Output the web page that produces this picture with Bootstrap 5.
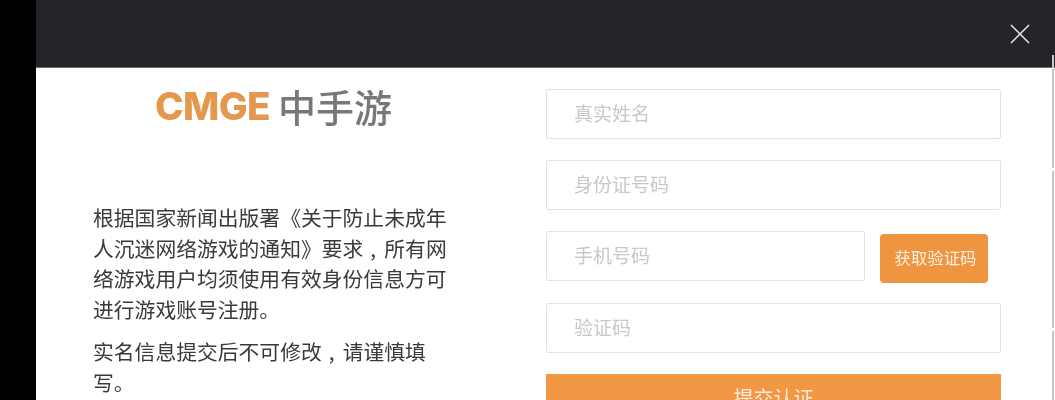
<!DOCTYPE html>
<html lang="zh"><head><meta charset="utf-8">
<link rel="stylesheet" href="https://cdn.jsdelivr.net/npm/bootstrap@5.3.0/dist/css/bootstrap.min.css">
<style>
html,body{height:400px;overflow:hidden;background:#000;font-family:"Noto Sans CJK SC","Noto Sans",sans-serif}
.sheet{margin-left:36px;height:400px;background:#fff;overflow:hidden;filter:blur(.45px)}
.topbar{height:68px;background:#232428;border-bottom:1px solid #6a6b6e;padding:24px 25px 0 0}
.closer{width:20px;height:20px;display:block}
.pane-left{width:510px;flex:none;padding:0 0 0 57px}
.brandline{height:52px;margin-top:12px;padding-left:62px;gap:8px;line-height:52px}
.brand-en{font:800 38.5px/52px Inter,"Liberation Sans",sans-serif;color:#e3984d;letter-spacing:-.6px}
.brand-cn{font-size:38px;line-height:52px;color:#77787a;font-weight:500}
.notice{font-size:20.8px;line-height:30.7px;color:#3a3a3a;margin:0 0 11px;width:356px}
.notice-first{margin-top:70px}
.pane-right{width:455px;flex:none;padding-top:21px}
.field{height:50px;border:1px solid #e3e3e3;border-radius:2px;padding:0 27px 3px;font-size:19px;margin-bottom:21px;box-shadow:none}
.field::placeholder{color:#c8c8c8}
.phonerow{margin-bottom:1px}
.smsbtn{width:108px;height:49px;flex:none;margin:3px 13px 0 15px;background:#ef9540;color:#fdf0e2;border:0;border-radius:4px;font-size:16.4px;padding:0 0 3px 3px;white-space:nowrap}
.submitbtn{height:50px;width:455px;background:#f29845;color:#fdeedd;border:0;border-radius:0;font-size:20px;padding:0 0 2px}
.edgeline{position:absolute;right:1px;top:55px;bottom:0;width:2.5px;gap:3px}
.edgepiece{background:#c6c6c6}
</style></head><body>
<div class="sheet position-relative">
<div class="topbar d-flex justify-content-end">
<svg class="closer" viewBox="0 0 20 20" fill="none" stroke="#e8e8e8" stroke-width="1.5"><path d="M1 1L19 19M19 1L1 19"/></svg>
</div>
<div class="d-flex">
<div class="pane-left">
<div class="brandline d-flex align-items-center"><span class="brand-en">CMGE</span><span class="brand-cn">中手游</span></div>
<p class="notice notice-first">根据国家新闻出版署《关于防止未成年人沉迷网络游戏的通知》要求&#8196;,&#8196;&#8202;所有网络游戏用户均须使用有效身份信息方可进行游戏账号注册。</p>
<p class="notice">实名信息提交后不可修改&#8196;,&#8196;&#8202;请谨慎填写。</p>
</div>
<form class="pane-right">
<input class="form-control field" placeholder="真实姓名">
<input class="form-control field" placeholder="身份证号码">
<div class="d-flex phonerow"><input class="form-control field" placeholder="手机号码"><button type="button" class="btn smsbtn">获取验证码</button></div>
<input class="form-control field" placeholder="验证码">
<button type="button" class="btn submitbtn d-block">提交认证</button>
</form>
</div>
<div class="edgeline d-flex flex-column">
<div class="edgepiece" style="height:113px"></div>
<div class="edgepiece" style="height:157px"></div>
<div class="edgepiece flex-grow-1"></div>
</div>
</div>
<script src="https://cdn.jsdelivr.net/npm/bootstrap@5.3.0/dist/js/bootstrap.bundle.min.js"></script>
</body></html>
